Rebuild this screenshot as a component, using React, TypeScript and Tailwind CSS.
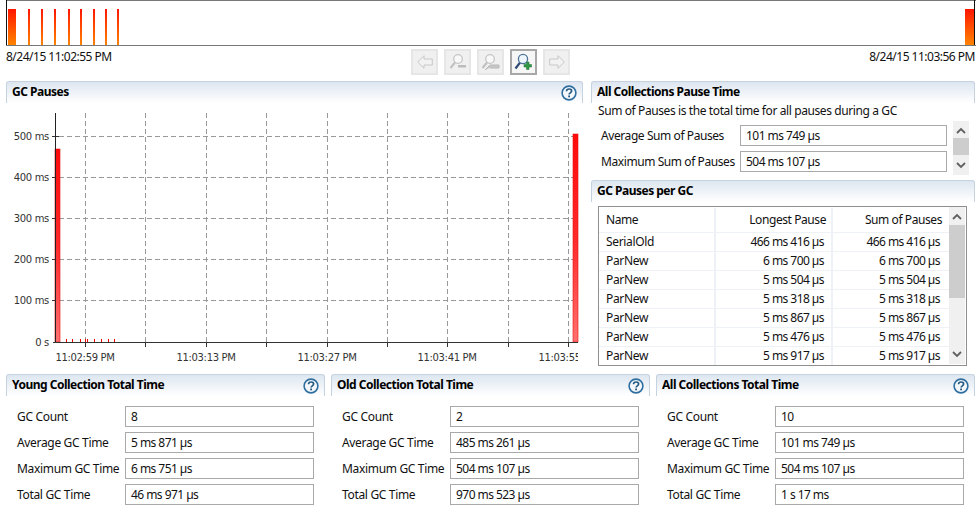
const font = "font-['Noto_Sans',sans-serif]";

function HelpIcon() {
  return (
    <svg width="16" height="16" viewBox="0 0 16 16" className="shrink-0">
      <circle cx="8" cy="8" r="6.900" fill="#f4f8fc" stroke="#2f6f9f" strokeWidth="1.600" />
      <path d="M5.500 6.200c.1-1.400 1.100-2.200 2.600-2.200 1.400 0 2.500.8 2.500 2 0 1.900-2.500 1.800-2.500 3.600" fill="none" stroke="#24587f" strokeWidth="1.700" />
      <rect x="7.200" y="10.500" width="1.800" height="1.800" fill="#24587f" />
    </svg>
  );
}

function PanelHeader({ title, help }: { title: string; help?: boolean }) {
  return (
    <div className="flex h-[22px] items-center justify-between rounded-t-[3px] border-x border-t border-[#c5d3e0] bg-gradient-to-b from-[#dde6f0] to-white pl-[5px] pr-[5px]">
      <span className="mb-[2px] text-[12px] font-bold tracking-[-0.5px] text-black">{title}</span>
      {help && <HelpIcon />}
    </div>
  );
}

function Field({ label, value, labelW, inputW }: { label: string; value: string; labelW: number; inputW: number }) {
  return (
    <div className="flex h-[21px] items-center">
      <span className="shrink-0 whitespace-nowrap" style={{ width: labelW }}>{label}</span>
      <div className="flex h-[21px] items-center border border-[#a9a9a9] bg-white pl-[5px] tracking-[-0.55px]" style={{ width: inputW }}>{value}</div>
    </div>
  );
}

function MetricPanel({ title, rows }: { title: string; rows: [string, string][] }) {
  return (
    <div className="w-[319px]">
      <PanelHeader title={title} help />
      <div className="mt-[10px] flex flex-col gap-[5px] pl-[11px]">
        {rows.map(([label, value]) => (
          <Field key={label} label={label} value={value} labelW={108} inputW={189} />
        ))}
      </div>
    </div>
  );
}

function Timeline() {
  const bars = [28, 41, 54, 68, 80, 93, 105, 117];
  return (
    <svg width="970" height="46" className="block">
      <defs>
        <linearGradient id="heat" x1="0" y1="0" x2="0" y2="1">
          <stop offset="0" stopColor="#ff1500" />
          <stop offset="1" stopColor="#ff8400" />
        </linearGradient>
      </defs>
      <rect x="0" y="0" width="970" height="46" fill="white" />
      <rect x="2" y="9" width="8" height="36" fill="url(#heat)" />
      {bars.map((x) => (
        <rect key={x} x={x - 6} y="9" width="2" height="36" fill="url(#heat)" />
      ))}
      <rect x="959" y="9" width="9" height="36" fill="url(#heat)" />
      <line x1="0" x2="970" y1="0.500" y2="0.500" stroke="#777" />
      <line x1="0" x2="970" y1="45.500" y2="45.500" stroke="#777" />
      <line x1="0.500" x2="0.500" y1="0" y2="45" stroke="#111" />
      <line x1="968.500" x2="968.500" y1="0" y2="45" stroke="#111" />
    </svg>
  );
}

function ToolButton({ active, children }: { active?: boolean; children: React.ReactNode }) {
  return (
    <div className={`flex h-[26px] w-[27px] items-center justify-center border-2 ${active ? "border-[#a8a8a8] bg-[#f6f6f6]" : "border-[#e6e6e6] bg-[#f0f0f0]"}`}>
      {children}
    </div>
  );
}

function Toolbar() {
  return (
    <div className="flex gap-[6px]">
      <ToolButton>
        <svg width="16" height="14" viewBox="0 0 16 14"><path d="M.7 7L7 .7V4H15.300V10H7V13.300Z" fill="#f2f2f2" stroke="#c8c8c8" /></svg>
      </ToolButton>
      <ToolButton>
        <svg width="18" height="18" viewBox="0 0 18 18">
          <circle cx="9" cy="6" r="4.300" fill="#f8f8f8" stroke="#c6c6c6" strokeWidth="1.300" />
          <path d="M6 9.500L1.500 15" stroke="#c0c0c0" strokeWidth="2" />
          <rect x="9" y="12" width="8" height="2.500" fill="#bdbdbd" />
        </svg>
      </ToolButton>
      <ToolButton>
        <svg width="19" height="18" viewBox="0 0 19 18">
          <circle cx="9" cy="6" r="4.300" fill="#f8f8f8" stroke="#c6c6c6" strokeWidth="1.300" />
          <path d="M6 9.500L1.500 15" stroke="#c0c0c0" strokeWidth="2" />
          <path d="M4 17L9 12H18V15H9" fill="#c8c8c8" stroke="#b8b8b8" />
        </svg>
      </ToolButton>
      <ToolButton active>
        <svg width="19" height="18" viewBox="0 0 19 18">
          <circle cx="9" cy="6" r="4.600" fill="#eef6fc" stroke="#4d7298" strokeWidth="1.300" />
          <path d="M5.800 9.800L1.500 15.500" stroke="#2c4a70" strokeWidth="2.200" />
          <path d="M12.500 9h2.500v2.500h2.500V14H15v2.500h-2.500V14H10v-2.500h2.500z" fill="#2f9a46" stroke="#1c6b30" strokeWidth="0.500" />
        </svg>
      </ToolButton>
      <ToolButton>
        <svg width="16" height="14" viewBox="0 0 16 14"><path d="M15.300 7L9 .7V4H.7V10H9V13.300Z" fill="#f2f2f2" stroke="#c8c8c8" /></svg>
      </ToolButton>
    </div>
  );
}

function PauseChart() {
  const gridX = [85, 145, 206, 266, 327, 387, 447, 508, 568];
  const gridY = [
    { y: 136, label: "500 ms" },
    { y: 177, label: "400 ms" },
    { y: 218, label: "300 ms" },
    { y: 259, label: "200 ms" },
    { y: 300, label: "100 ms" },
  ];
  const timeLabels = [
    { x: 85, t: "11:02:59 PM" },
    { x: 206, t: "11:03:13 PM" },
    { x: 327, t: "11:03:27 PM" },
    { x: 447, t: "11:03:41 PM" },
    { x: 568, t: "11:03:55 PM" },
  ];
  const spikes = [66, 72, 80, 85, 87, 94, 101, 108, 114];
  const axisFont = "'DejaVu Sans', sans-serif";
  // svg origin sits at page x=6, y=103
  return (
    <svg width="577" height="271" viewBox="6 103 577 271" className="block">
      <defs>
        <clipPath id="plot"><rect x="6" y="103" width="572" height="271" /></clipPath>
        <linearGradient id="pause" x1="0" y1="0" x2="0" y2="1">
          <stop offset="0" stopColor="#ff0a0a" />
          <stop offset="0.500" stopColor="#ff2a2a" />
          <stop offset="1" stopColor="#ff7070" />
        </linearGradient>
      </defs>
      {gridX.map((x) => (
        <g key={x}>
          <line x1={x + 0.5} x2={x + 0.5} y1="113" y2="342" stroke="#999" strokeDasharray="5 3" />
          <line x1={x + 0.5} x2={x + 0.5} y1="342" y2="347" stroke="#333" />
        </g>
      ))}
      {gridY.map(({ y, label }) => (
        <g key={y}>
          <line x1="59" x2="578" y1={y + 0.5} y2={y + 0.5} stroke="#999" strokeDasharray="5 3" />
          <line x1="52" x2="59" y1={y + 0.5} y2={y + 0.5} stroke="#333" />
          <text x="49" y={y + 4} textAnchor="end" fontSize="10" fill="#333" fontFamily={axisFont}>{label}</text>
        </g>
      ))}
      <text x="49" y="346" textAnchor="end" fontSize="10" fill="#333" fontFamily={axisFont}>0 s</text>
      <rect x="55" y="149" width="5" height="193" fill="url(#pause)" stroke="#e81010" strokeWidth="0.600" />
      <rect x="573" y="134" width="5" height="208" fill="url(#pause)" stroke="#e81010" strokeWidth="0.600" />
      {spikes.map((x) => (
        <line key={x} x1={x + 0.5} x2={x + 0.5} y1="339" y2="342" stroke="#e00" />
      ))}
      <line x1="55.500" x2="55.500" y1="113" y2="342" stroke="#222" />
      <line x1="53" x2="578" y1="342.500" y2="342.500" stroke="#333" />
      <g clipPath="url(#plot)">
        {timeLabels.map(({ x, t }) => (
          <text key={t} x={x} y="361" textAnchor="middle" fontSize="10" fill="#333" fontFamily={axisFont}>{t}</text>
        ))}
      </g>
    </svg>
  );
}

function ScrollBar({ thumbTop, thumbH, h, w }: { thumbTop: number; thumbH: number; h: number; w: number }) {
  return (
    <div className="relative shrink-0 bg-[#f0f0f0]" style={{ width: w, height: h }}>
      <svg width={w} height="14" className="absolute left-0 top-[3px]"><path d={`M${w / 2 - 4} 9L${w / 2} 5L${w / 2 + 4} 9`} fill="none" stroke="#606060" strokeWidth="1.800" /></svg>
      <div className="absolute left-0 w-full bg-[#cdcdcd]" style={{ top: thumbTop, height: thumbH }} />
      <svg width={w} height="14" className="absolute bottom-[3px] left-0"><path d={`M${w / 2 - 4} 5L${w / 2} 9L${w / 2 + 4} 5`} fill="none" stroke="#606060" strokeWidth="1.800" /></svg>
    </div>
  );
}

const tableRows = [
  ["SerialOld", "466 ms 416 µs", "466 ms 416 µs"],
  ["ParNew", "6 ms 700 µs", "6 ms 700 µs"],
  ["ParNew", "5 ms 504 µs", "5 ms 504 µs"],
  ["ParNew", "5 ms 318 µs", "5 ms 318 µs"],
  ["ParNew", "5 ms 867 µs", "5 ms 867 µs"],
  ["ParNew", "5 ms 476 µs", "5 ms 476 µs"],
  ["ParNew", "5 ms 917 µs", "5 ms 917 µs"],
];

function PausesTable() {
  return (
    <div className="flex h-[160px] w-[369px] overflow-hidden border border-[#8f8f8f] bg-white">
      <div className="w-[350px] pt-[1px]">
        <div className="flex h-[25px] items-center border-b border-[#eef2f7] tracking-[-0.42px]">
          <div className="w-[117px] border-r-2 border-[#eef2f7] pl-[7px] leading-[24px]">Name</div>
          <div className="w-[117px] border-r-2 border-[#eef2f7] pr-[5px] text-right leading-[24px]">Longest Pause</div>
          <div className="w-[114px] pr-[5px] text-right leading-[24px]">Sum of Pauses</div>
        </div>
        {tableRows.map((row, i) => (
          <div key={i} className="flex h-[19px] items-center border-b border-[#eef2f7]">
            <div className="w-[117px] border-r-2 border-[#eef2f7] pl-[7px] leading-[18px]">{row[0]}</div>
            <div className="w-[117px] border-r-2 border-[#eef2f7] pr-[7px] text-right leading-[18px] tracking-[-0.55px]">{row[1]}</div>
            <div className="w-[114px] pr-[7px] text-right leading-[18px] tracking-[-0.55px]">{row[2]}</div>
          </div>
        ))}
      </div>
      <ScrollBar w={16} h={157} thumbTop={18} thumbH={73} />
    </div>
  );
}

export default function App() {
  return (
    <div className={`${font} h-[527px] w-[977px] overflow-hidden bg-white text-[12px] leading-none tracking-[-0.33px] text-[#111]`}>
      <div className="pl-[6px]">
        <Timeline />
      </div>

      <div className="flex h-[35px] justify-between pl-[6px] pr-[2px]">
        <span className="mt-[5px] tracking-[-0.5px]">8/24/15 11:02:55 PM</span>
        <div className="mt-[3px]"><Toolbar /></div>
        <span className="mt-[5px] tracking-[-0.5px]">8/24/15 11:03:56 PM</span>
      </div>

      <div className="flex h-[293px] pl-[6px]">
        <div className="w-[577px]">
          <PanelHeader title="GC Pauses" help />
          <PauseChart />
        </div>

        <div className="ml-[8px] w-[384px]">
          <PanelHeader title="All Collections Pause Time" />
          <p className="ml-[7px] mt-[1px] leading-[14px] tracking-[-0.4px]">Sum of Pauses is the total time for all pauses during a GC</p>
          <div className="relative mt-[7px] h-[55px] tracking-[-0.42px]">
            <div className="flex flex-col gap-[5px] pl-[10px]">
              <Field label="Average Sum of Pauses" value="101 ms 749 µs" labelW={139} inputW={207} />
              <Field label="Maximum Sum of Pauses" value="504 ms 107 µs" labelW={139} inputW={207} />
            </div>
            <div className="absolute left-[362px] top-[-4px]">
              <ScrollBar w={16} h={54} thumbTop={17} thumbH={17} />
            </div>
          </div>
          <PanelHeader title="GC Pauses per GC" />
          <div className="ml-[7px] mt-[4px]">
            <PausesTable />
          </div>
        </div>
      </div>

      <div className="flex gap-[6px] pl-[6px]">
        <MetricPanel
          title="Young Collection Total Time"
          rows={[
            ["GC Count", "8"],
            ["Average GC Time", "5 ms 871 µs"],
            ["Maximum GC Time", "6 ms 751 µs"],
            ["Total GC Time", "46 ms 971 µs"],
          ]}
        />
        <MetricPanel
          title="Old Collection Total Time"
          rows={[
            ["GC Count", "2"],
            ["Average GC Time", "485 ms 261 µs"],
            ["Maximum GC Time", "504 ms 107 µs"],
            ["Total GC Time", "970 ms 523 µs"],
          ]}
        />
        <MetricPanel
          title="All Collections Total Time"
          rows={[
            ["GC Count", "10"],
            ["Average GC Time", "101 ms 749 µs"],
            ["Maximum GC Time", "504 ms 107 µs"],
            ["Total GC Time", "1 s 17 ms"],
          ]}
        />
      </div>
    </div>
  );
}
